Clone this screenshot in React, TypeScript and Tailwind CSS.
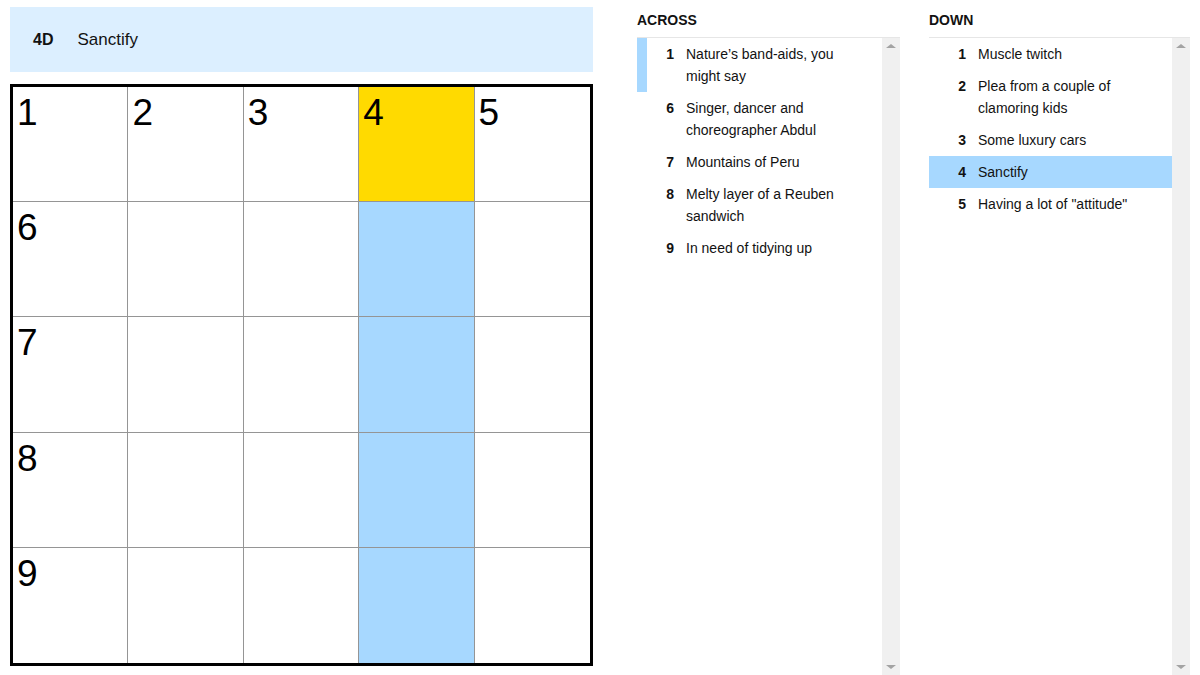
import React from 'react'

type Clue = { num: number; text: string }

const ACROSS: Clue[] = [
  { num: 1, text: 'Nature’s band-aids, you might say' },
  { num: 6, text: 'Singer, dancer and choreographer Abdul' },
  { num: 7, text: 'Mountains of Peru' },
  { num: 8, text: 'Melty layer of a Reuben sandwich' },
  { num: 9, text: 'In need of tidying up' },
]

const DOWN: Clue[] = [
  { num: 1, text: 'Muscle twitch' },
  { num: 2, text: 'Plea from a couple of clamoring kids' },
  { num: 3, text: 'Some luxury cars' },
  { num: 4, text: 'Sanctify' },
  { num: 5, text: 'Having a lot of "attitude"' },
]

const LABELS: Record<number, string> = { 0: '1', 1: '2', 2: '3', 3: '4', 4: '5', 5: '6', 10: '7', 15: '8', 20: '9' }

function Cell({ idx }: { idx: number }) {
  const row = Math.floor(idx / 5)
  const col = idx % 5
  let bg = 'bg-white'
  if (col === 3 && row === 0) bg = 'bg-[#ffda00]'
  else if (col === 3) bg = 'bg-[#a7d8ff]'
  return (
    <div
      className={`${bg} ${col < 4 ? 'border-r' : ''} ${row < 4 ? 'border-b' : ''} border-[#959595] relative`}
    >
      {LABELS[idx] && (
        <span className="absolute left-[4px] top-[7px] text-[37px] leading-none text-black">{LABELS[idx]}</span>
      )}
    </div>
  )
}

function ScrollTrack() {
  return (
    <div className="w-[18px] bg-[#f0f0f0] flex flex-col items-center justify-between py-[6px]">
      <div className="w-0 h-0 border-l-[5px] border-r-[5px] border-b-[4px] border-l-transparent border-r-transparent border-b-[#a3a3a3]" />
      <div className="w-0 h-0 border-l-[5px] border-r-[5px] border-t-[4px] border-l-transparent border-r-transparent border-t-[#a3a3a3]" />
    </div>
  )
}

function ClueList({ title, clues, active, crossing, width }: {
  title: string; clues: Clue[]; active?: number; crossing?: number; width: string
}) {
  return (
    <div className={`${width} flex flex-col h-full`}>
      <div className="h-[38px] border-b border-[#e6e6e6] flex items-center">
        <span className="text-[14px] font-bold text-[#121212] mt-[3px]">{title}</span>
      </div>
      <div className="flex flex-1">
        <ul className="flex-1">
          {clues.map(c => (
            <li
              key={c.num}
              className={`flex py-[5px] text-[14px] leading-[22px] text-[#121212] ${c.num === active ? 'bg-[#a7d8ff]' : ''} ${c.num === crossing ? 'border-l-[10px] border-[#a7d8ff]' : 'border-l-[10px] border-transparent'}`}
            >
              <span className="w-[27px] text-right font-bold shrink-0">{c.num}</span>
              <span className="ml-[12px] pr-[14px]">{c.text}</span>
            </li>
          ))}
        </ul>
        <ScrollTrack />
      </div>
    </div>
  )
}

export default function App() {
  return (
    <div className="w-[1200px] h-[675px] bg-white flex overflow-hidden" style={{ fontFamily: '"Liberation Sans", Arial, sans-serif' }}>
      {/* Board */}
      <div className="ml-[10px] mt-[7px] w-[583px] flex flex-col">
        <div className="h-[65px] bg-[#dcefff] flex items-center px-[23px]">
          <span className="text-[16px] font-bold text-[#121212]">4D</span>
          <span className="ml-[24px] text-[17px] text-[#121212]">Sanctify</span>
        </div>
        <div className="mt-[12px] h-[582px] border-[3px] border-black grid grid-cols-5 grid-rows-5">
          {Array.from({ length: 25 }, (_, i) => <Cell key={i} idx={i} />)}
        </div>
      </div>

      {/* Clues */}
      <div className="ml-[44px] flex h-full">
        <ClueList title="ACROSS" clues={ACROSS} crossing={1} width="w-[263px]" />
        <div className="w-[29px]" />
        <ClueList title="DOWN" clues={DOWN} active={4} width="w-[261px]" />
      </div>
    </div>
  )
}
